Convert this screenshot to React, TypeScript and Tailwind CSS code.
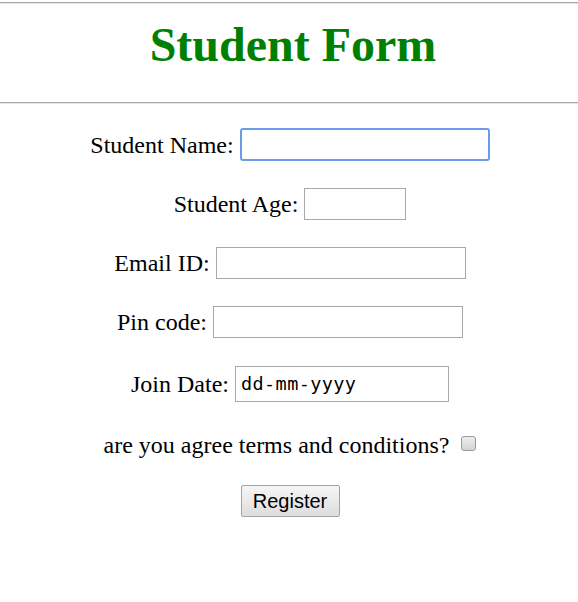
import React from "react";

const serif = "font-['Liberation_Serif','Times_New_Roman',serif]";

function Row({
  label,
  inputClass,
  height = "h-[59px]",
}: {
  label: string;
  inputClass: string;
  height?: string;
}) {
  return (
    <div className={`flex items-center justify-center gap-[6px] ${height}`}>
      <label className="text-[24px] leading-none text-black">{label}</label>
      <input
        type="text"
        className={`h-[32px] border border-[#a9a9a9] bg-white px-[3px] outline-none ${inputClass}`}
      />
    </div>
  );
}

export default function App() {
  return (
    <div className={`w-[578px] h-[602px] bg-white ${serif}`}>
      {/* Header */}
      <div className="pt-[2px]">
        <div className="border-t border-b border-t-[#a8a8a8] border-b-[#e6e6e6]" />
        <h1 className="h-[98px] flex items-center justify-center text-[48px] font-bold text-[#008000] leading-none pb-[17px] pl-[8px]">
          Student Form
        </h1>
        <div className="border-t border-b border-t-[#a8a8a8] border-b-[#e6e6e6]" />
      </div>

      {/* Form */}
      <form className="flex flex-col pt-[11px] pl-[2px]">
        <div className="flex items-center justify-center gap-[6px] h-[59px]">
          <label className="text-[24px] leading-none text-black">Student Name:</label>
          <input
            type="text"
            autoFocus
            className="h-[33px] w-[250px] border-2 border-[#6b9ce8] rounded-[3px] bg-white px-[3px] outline-none text-[20px]"
          />
        </div>
        <Row label="Student Age:" inputClass="w-[102px]" />
        <Row label="Email ID:" inputClass="w-[250px]" />
        <Row label="Pin code:" inputClass="w-[250px]" />
        <div className="flex items-center justify-center gap-[6px] h-[65px]">
          <label className="text-[24px] leading-none text-black">Join Date:</label>
          <div className="h-[36px] w-[214px] border border-[#a9a9a9] bg-white flex items-center px-[5px] font-['DejaVu_Sans_Mono',monospace] text-[18.5px] text-black tracking-[0.4px]">
            dd-mm-yyyy
          </div>
        </div>
        <div className="flex items-center justify-center gap-[12px] h-[58px]">
          <label className="text-[24px] leading-none text-black">
            are you agree terms and conditions?
          </label>
          <span className="w-[15px] h-[15px] rounded-[3px] border border-[#9a9a9a] bg-gradient-to-b from-[#ededed] to-[#d4d4d4] mb-[4px]" />
        </div>
        <div className="flex items-center justify-center h-[54px]">
          <button
            type="button"
            className="h-[32px] w-[99px] border border-[#a3a3a3] rounded-[2px] bg-gradient-to-b from-[#f6f6f6] to-[#dddddd] font-['Liberation_Sans',Arial,sans-serif] text-[20px] text-black"
          >
            Register
          </button>
        </div>
      </form>
    </div>
  );
}
